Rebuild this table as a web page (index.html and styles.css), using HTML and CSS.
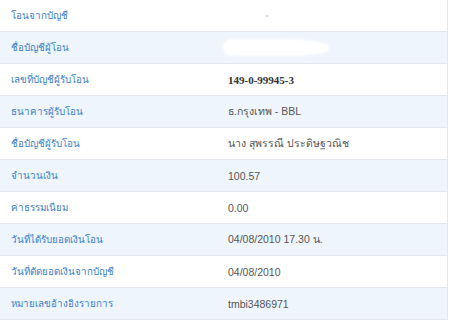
FILE: index.html
```html
<!DOCTYPE html>
<html lang="th">
<head>
<meta charset="utf-8">
<link rel="stylesheet" href="styles.css">
</head>
<body>
<div class="table">
  <div class="row"><div class="label">โอนจากบัญชี</div><div class="value"><span class="dot"></span></div></div>
  <div class="row alt"><div class="label">ชื่อบัญชีผู้โอน</div><div class="value"><span class="blot"></span></div></div>
  <div class="row"><div class="label">เลขที่บัญชีผู้รับโอน</div><div class="value strong">149-0-99945-3</div></div>
  <div class="row alt"><div class="label">ธนาคารผู้รับโอน</div><div class="value">ธ.กรุงเทพ - BBL</div></div>
  <div class="row"><div class="label">ชื่อบัญชีผู้รับโอน</div><div class="value">นาง สุพรรณี ประดิษฐวณิช</div></div>
  <div class="row alt"><div class="label">จำนวนเงิน</div><div class="value">100.57</div></div>
  <div class="row"><div class="label">ค่าธรรมเนียม</div><div class="value">0.00</div></div>
  <div class="row alt"><div class="label">วันที่ได้รับยอดเงินโอน</div><div class="value">04/08/2010 17.30 น.</div></div>
  <div class="row"><div class="label">วันที่ตัดยอดเงินจากบัญชี</div><div class="value">04/08/2010</div></div>
  <div class="row alt"><div class="label">หมายเลขอ้างอิงรายการ</div><div class="value">tmbi3486971</div></div>
</div>
</body>
</html>
```

FILE: styles.css
```css
html, body {
  margin: 0;
  padding: 0;
  background: #ffffff;
}
.table {
  width: 447px;
  border-right: 1px solid #e3e6ea;
  display: flex;
  flex-direction: column;
}
.row {
  display: grid;
  grid-template-columns: 228px 1fr;
  height: 31px;
  border-bottom: 1px solid #e2e7ec;
  align-items: center;
  background: #ffffff;
}
.row.alt {
  background: #eef5fc;
}
.label {
  padding-left: 11px;
  font-family: Tahoma, "Noto Sans", "DejaVu Sans", sans-serif;
  font-size: 9.8px;
  color: #3a80c8;
}
.value {
  font-family: "Liberation Sans", Arial, "Noto Sans", sans-serif;
  font-size: 10.5px;
  color: #555555;
  display: flex;
  align-items: center;
}
.value.strong {
  font-weight: bold;
  color: #333333;
  font-family: "Liberation Serif", serif;
  font-size: 11px;
}
.dot {
  width: 2px;
  height: 2px;
  background: #d8dde2;
  margin-left: 38px;
}
.blot {
  display: block;
  width: 104px;
  height: 15px;
  background: #ffffff;
  border-radius: 8px 50% 40% 8px;
  box-shadow: 0 0 3px 1px #ffffff;
  margin-left: -4px;
}
```
